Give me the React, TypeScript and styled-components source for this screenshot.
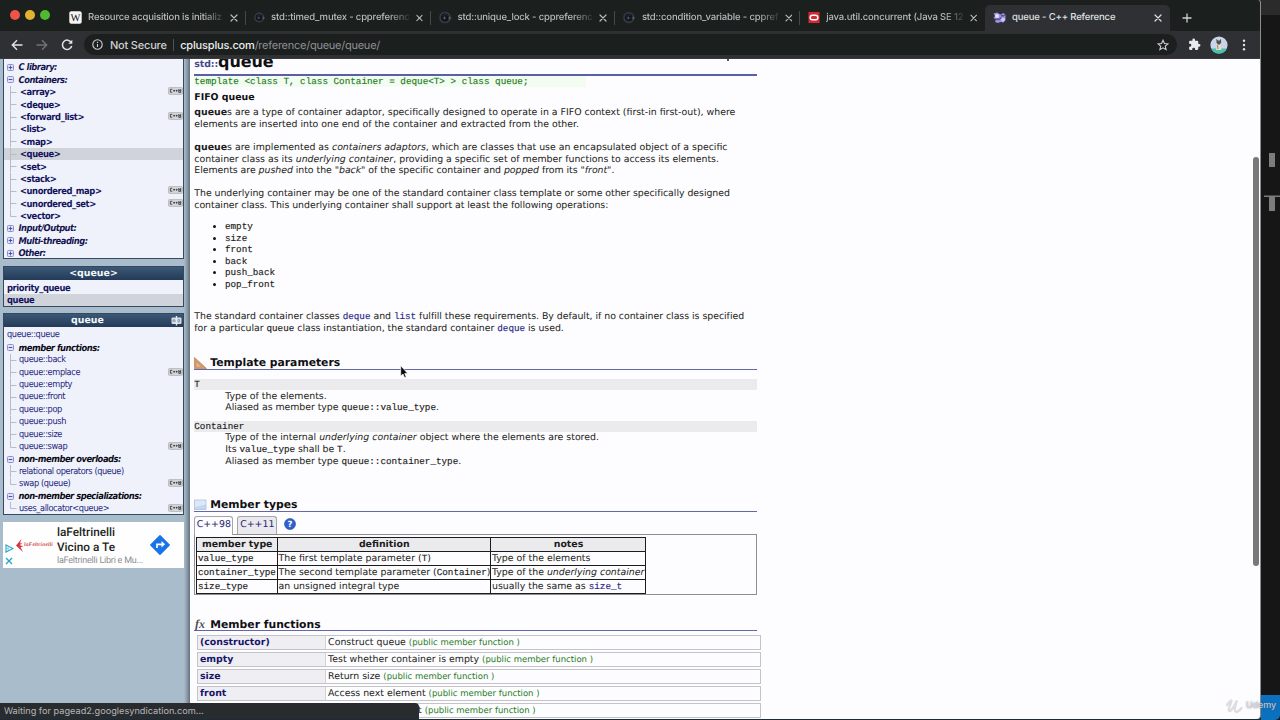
import React from "react";
import styled, { createGlobalStyle, css } from "styled-components";

const sans = `"DejaVu Sans", sans-serif`;
const narrow = `"DejaVu Sans Condensed", "DejaVu Sans", sans-serif`;
const mono = `"Liberation Mono", monospace`;
const ui = `Inter, sans-serif`;

const Global = createGlobalStyle`
  * { box-sizing: border-box; }
  body { margin: 0; background: #161616; overflow: hidden; text-rendering: geometricPrecision; }
`;

const Desktop = styled.div`
  display: flex;
  width: 1280px;
  height: 720px;
  overflow: hidden;
  background: #1d2b38;
  position: relative;
`;

const Browser = styled.div`
  width: 1261px;
  height: 719px;
  display: flex;
  flex-direction: column;
  overflow: hidden;
  border-radius: 0 3px 4px 3px;
  border-right: 1px solid #8d8d8f;
  background: #fdfcfe;
`;

/* ---------- browser chrome ---------- */

const TabStrip = styled.div`
  height: 31px;
  flex: none;
  display: flex;
  background: #1b1f1e;
  padding-top: 5px;
`;

const Lights = styled.div`
  width: 61px;
  flex: none;
  display: flex;
  gap: 5px;
  padding: 5px 0 0 10px;
`;

const Light = styled.span<{ $c: string }>`
  width: 10px;
  height: 10px;
  border-radius: 50%;
  background: ${(p) => p.$c};
`;

const TabBox = styled.div<{ $active?: boolean; $line?: boolean }>`
  width: 184.8px;
  flex: none;
  height: 26px;
  display: flex;
  align-items: center;
  padding: 0 8px 1px 8px;
  color: #b9bbbd;
  position: relative;
  ${(p) =>
    p.$active &&
    css`
      background: #2f3033;
      color: #dfe0e2;
      border-radius: 5px 5px 0 0;
    `}
  ${(p) =>
    p.$line &&
    css`
      &::after {
        content: "";
        position: absolute;
        right: 0;
        top: 6px;
        width: 1px;
        height: 14px;
        background: #46494b;
      }
    `}
`;

const TabTitle = styled.span<{ $fade?: boolean }>`
  flex: 1;
  margin: 0 6px;
  padding-top: 1px;
  white-space: nowrap;
  font: 500 9.5px/16px ${ui};
  letter-spacing: -0.15px;
  ${(p) => p.$fade && css`mask-image: linear-gradient(90deg, #000 85%, rgba(0, 0, 0, 0.1) 100%);`}
`;

const NewTab = styled.div`
  padding: 8px 0 0 12px;
  display: flex;
  color: #cfd0d2;
`;

const Toolbar = styled.div`
  height: 28px;
  flex: none;
  display: flex;
  align-items: center;
  background: #2f3033;
  border-bottom: 1px solid #3a3b3d;
  padding: 0 14px 0 11px;
  color: #e3e4e6;
`;

const NavIcons = styled.div`
  display: flex;
  gap: 13px;
  width: 73px;
  flex: none;
`;

const Address = styled.div`
  flex: 1;
  height: 21px;
  border-radius: 11px;
  background: #1b1f1e;
  display: flex;
  align-items: center;
  padding: 0 8px;
  font: 400 11px/20px ${ui};
  white-space: nowrap;
`;

const Secure = styled.span`
  margin-left: 7px;
  padding-right: 6px;
  color: #cfd0d2;
  letter-spacing: -0.2px;
  font-weight: 500;
`;
const Divider = styled.span`
  width: 1px;
  height: 12px;
  background: #505355;
  margin-right: 6.5px;
`;
const Host = styled.span`
  color: #eceded;
  letter-spacing: -0.17px;
  font-weight: 500;
`;
const Path = styled.span`
  flex: 1;
  color: #8f9395;
  letter-spacing: -0.25px;
`;
const ToolEnd = styled.div`
  display: flex;
  align-items: center;
  gap: 9.5px;
  margin-left: 10.5px;
`;
const Menu = styled.span`
  display: flex;
  margin-left: 4.5px;
`;

/* ---------- page ---------- */

const Page = styled.div`
  flex: 1;
  min-height: 0;
  display: flex;
  overflow: hidden;
`;

const Sidebar = styled.aside`
  width: 190px;
  flex: none;
  padding: 0 6px 0 3px;
  background: linear-gradient(90deg, #a9bccb 0, #a9bccb 184px, #8b9ba9 187px, #617080 190px);
  font-family: ${narrow};
`;

const Panel = styled.section<{ $top: number; $height: number }>`
  width: 181px;
  height: ${(p) => p.$height}px;
  margin-top: ${(p) => p.$top}px;
  border: 1px solid #34495d;
  background: #eff2fa;
  overflow: hidden;
`;

const PanelHead = styled.header`
  height: 13px;
  display: flex;
  align-items: center;
  justify-content: center;
  background: linear-gradient(#3b5876, #233b58);
  color: #f4f6fa;
  font: bold 9.4px/12px ${sans};
`;
const HeadText = styled.span<{ $push?: boolean }>`
  ${(p) => p.$push && css`flex: 1; text-align: center;`}
`;

const Rows = styled.div<{ $pad: number }>`
  padding-top: ${(p) => p.$pad}px;
`;

type RowKind = "group" | "groupBlack" | "bold" | "link" | "flat" | "flatBold";

const Row = styled.div<{ $kind: RowKind; $on?: boolean; $ls: number }>`
  height: 12.4px;
  display: flex;
  align-items: center;
  white-space: nowrap;
  padding-left: 3px;
  color: #24247c;
  background: ${(p) => (p.$on ? "#d1d3da" : "transparent")};
  font-size: 9.15px;
  line-height: 11px;
  letter-spacing: ${(p) => p.$ls}px;
  ${(p) =>
    (p.$kind === "group" || p.$kind === "groupBlack") &&
    css`
      font-size: 9.3px;
      font-weight: bold;
      font-style: italic;
      color: ${p.$kind === "group" ? "#14144e" : "#0b0b16"};
    `}
  ${(p) => (p.$kind === "bold" || p.$kind === "flatBold") && css`font-size: 9.3px; font-weight: bold; color: #14145c;`}
`;
const RowText = styled.span<{ $gap: number }>`
  flex: 1;
  padding-top: 1.4px;
  margin-left: ${(p) => p.$gap}px;
`;
const BadgeBox = styled.span`
  display: flex;
  padding: 0 0.5px 1.5px 0;
`;

const Ad = styled.div`
  margin-top: 7px;
  width: 181px;
  height: 46px;
  background: #fefefe;
  display: flex;
  align-items: center;
  font-family: Roboto, sans-serif;
`;
const AdMarks = styled.div`
  width: 11px;
  display: flex;
  flex-direction: column;
  gap: 4px;
  padding: 19px 0 0 2px;
`;
const AdLogo = styled.div`
  display: flex;
  align-items: center;
  width: 43px;
  font: bold italic 5.6px/8px "Liberation Serif", serif;
  letter-spacing: 0.1px;
  color: #d4545a;
  padding-left: 2px;
`;
const AdCopy = styled.div`
  width: 93px;
  padding-top: 1.5px;
  white-space: nowrap;
`;
const AdHead = styled.div`
  font-size: 11.8px;
  line-height: 15px;
  font-weight: 500;
  color: #1d1e20;
`;
const AdSub = styled.div`
  font-size: 9px;
  line-height: 12px;
  letter-spacing: -0.23px;
  color: #8d8e91;
`;

const Main = styled.main`
  width: 572px;
  flex: none;
  padding-left: 4.3px;
  font: 9.38px/11.65px ${sans};
  color: #1c1c20;
  white-space: nowrap;
`;

const Title = styled.h1`
  margin: 0;
  width: 563px;
  height: 17px;
  overflow: hidden;
  display: flex;
  justify-content: space-between;
  border-bottom: 2px solid #5960a5;
`;
const TitleText = styled.div`
  font: bold 16px/18px ${sans};
  color: #101014;
  margin-top: -6px;
  letter-spacing: -0.1px;
`;
const Std = styled.span`
  font-size: 9.4px;
  color: #454a8c;
`;
const Tail = styled.span`
  width: 2px;
  height: 2px;
  margin: 0 28px 0 0;
  background: #555;
`;

const Proto = styled.div`
  width: 392px;
  height: 11px;
  background: #f2fcf1;
  font: 9.29px/12px ${mono};
  color: #1f7d1f;
  -webkit-text-stroke: 0.15px #1f7d1f;
`;

const Tagline = styled.div`
  margin-top: 5px;
  height: 12px;
  font-weight: bold;
  color: #101014;
`;

const Lines = styled.div<{ $top: number; $indent?: number }>`
  margin-top: ${(p) => p.$top}px;
  padding-left: ${(p) => p.$indent ?? 0}px;
`;
const Line = styled.div<{ $ls?: number }>`
  height: 11.65px;
  letter-spacing: ${(p) => p.$ls ?? 0}px;
`;
const Code = styled.code<{ $link?: boolean }>`
  font: 9.28px/11px ${mono};
  letter-spacing: 0;
  color: ${(p) => (p.$link ? "#2a2a86" : "inherit")};
  -webkit-text-stroke: 0.15px currentColor;
`;
const OpRow = styled.div`
  height: 11.65px;
  display: flex;
  align-items: center;
  gap: 8.7px;
  padding-left: 19px;
`;
const Bullet = styled.span`
  width: 3px;
  height: 3px;
  border-radius: 50%;
  background: #141418;
`;

const Section = styled.h2<{ $top: number }>`
  margin: ${(p) => p.$top}px 0 0;
  width: 563px;
  height: 15px;
  display: flex;
  align-items: center;
  border-bottom: 1px solid #6468a9;
  padding-top: 1.4px;
  font: bold 10.8px/13px ${sans};
  color: #101014;
`;
const SectionIcon = styled.span`
  width: 16px;
  flex: none;
  display: flex;
`;
const Bar = styled.div<{ $top: number }>`
  margin-top: ${(p) => p.$top}px;
  width: 563px;
  height: 10.6px;
  background: #ebebed;
  line-height: 10px;
`;

const Switcher = styled.div`
  margin-top: 4px;
  height: 19px;
  display: flex;
  align-items: flex-start;
`;
const Switch = styled.span<{ $on?: boolean }>`
  height: ${(p) => (p.$on ? 19 : 18)}px;
  width: ${(p) => (p.$on ? 39 : 40)}px;
  margin-right: 4px;
  border: 1px solid #a6a6aa;
  border-bottom: 0;
  border-radius: 3px 3px 0 0;
  background: ${(p) => (p.$on ? "#fdfcfe" : "#e9e9ee")};
  color: #24246c;
  text-align: center;
  line-height: 16px;
  position: relative;
`;
const Help = styled.span`
  margin: 2.5px 0 0 3px;
`;
const Box = styled.div`
  width: 563px;
  height: 61px;
  margin-top: -1px;
  border: 1px solid #8f8f92;
  padding: 2px 0 0 1.2px;
`;
const Grid = styled.table`
  border-collapse: collapse;
  table-layout: fixed;
  width: 449px;
  line-height: 11px;
  font-size: 9.39px;
`;
const Col = styled.col<{ $w: number }>`
  width: ${(p) => p.$w}px;
`;
const Th = styled.th`
  height: 14px;
  padding: 0;
  border: 1px solid #1c1c1f;
  background: #ebebee;
`;
const Td = styled.td`
  height: 14px;
  padding: 0 0 0 0.5px;
  border: 1px solid #1c1c1f;
`;

const FnList = styled.div`
  margin: 4px 0 0 2.5px;
  width: 564.5px;
  display: flex;
  flex-direction: column;
  gap: 2px;
`;
const FnRow = styled.div`
  height: 15px;
  display: flex;
  border: 1px solid #c3c3c8;
  line-height: 14.2px;
`;
const FnName = styled.div`
  width: 128px;
  flex: none;
  background: #efeff3;
  border-right: 1px solid #d2d2d6;
  padding-left: 2.2px;
  font-weight: bold;
  color: #17176a;
`;
const FnText = styled.div`
  padding-left: 2.3px;
`;
const Kind = styled.span`
  color: #1f7d1f;
  font-size: 8.5px;
`;

const ScrollTrack = styled.div`
  flex: 1;
  display: flex;
  justify-content: flex-end;
  padding: 98px 1px 0 0;
`;
const Thumb = styled.div`
  width: 6px;
  height: 409px;
  border-radius: 3px;
  background: #78787a;
`;

/* ---------- neighbouring window and overlays ---------- */

const Editor = styled.div`
  width: 19px;
  height: 720px;
  background: #161616;
  display: flex;
  flex-direction: column;
`;
const EditorHead = styled.div`
  height: 15px;
  background: #2b2b2b;
`;
const EditorBody = styled.div`
  flex: 1;
`;
const EditorStatus = styled.div`
  height: 25px;
  background: #0b70bd;
  border-radius: 0 0 5px 0;
`;
const Status = styled.div`
  position: absolute;
  left: 0;
  top: 703px;
  width: 419px;
  height: 16px;
  padding-left: 4px;
  border-radius: 0 4px 0 0;
  background: #292c2f;
  color: #b4b6b8;
  font: 400 9.2px/17px ${ui};
`;
const Pointer = styled.div`
  position: absolute;
  left: 400px;
  top: 365px;
`;
const Mark = styled.div`
  position: absolute;
  left: 1225px;
  top: 697px;
  display: flex;
  align-items: center;
  gap: 3px;
  color: rgba(214, 216, 222, 0.85);
  font: 500 9px/18px ${ui};
  letter-spacing: -0.1px;
  text-shadow: 0 0 2px rgba(90, 90, 100, 0.7);
`;

/* ---------- icons ---------- */

const Close = () => (
  <svg width="8" height="8" viewBox="0 0 8 8" stroke="currentColor" strokeWidth="1.2" strokeLinecap="round">
    <path d="M1 1l6 6M7 1L1 7" />
  </svg>
);
const WikiIcon = () => (
  <svg width="13" height="13" viewBox="0 0 13 13">
    <rect x=".3" y=".3" width="12.4" height="12.4" rx="2" fill="#f5f5f5" />
    <text x="6.5" y="10" textAnchor="middle" fontFamily="Liberation Serif, serif" fontSize="10.5" fill="#111">W</text>
  </svg>
);
const CppRefIcon = () => (
  <svg width="13" height="13" viewBox="0 0 13 13" fill="none">
    <circle cx="6" cy="6.5" r="5" fill="#11151a" stroke="#363c45" strokeWidth="1.7" />
    <path d="M3.500 5.500a3 3 0 0 1 5-1" stroke="#2b313a" />
    <path d="M4 7h3M9 7h3.500M10.700 5.300v3.400M5.500 5.500v3" stroke="#525c6a" strokeWidth="1" />
  </svg>
);
const OracleIcon = () => (
  <svg width="13" height="13" viewBox="0 0 13 13">
    <rect x=".5" y=".5" width="12" height="12" fill="#d32a31" />
    <rect x="2.3" y="4" width="8.400" height="5" rx="2.5" fill="none" stroke="#fff" strokeWidth="1.5" />
  </svg>
);
const CplusIcon = () => (
  <svg width="13" height="13" viewBox="0 0 13 13">
    <path d="M.5 2.500L4 1.500l3.500 2 3-1.500 2 2v5l-2 2.500-3-.5L5 12 2 11l1-2.500L.5 7 2 5z" fill="#9b92e0" />
    <circle cx="4" cy="5" r="2" fill="#e4e0fb" />
    <circle cx="10" cy="8.500" r="1.900" fill="#cfc9f7" />
    <path d="M2.500 8l3.500.5 2.500-2M8 4.500l2 .5 2-1" stroke="#554ca0" strokeWidth="1.300" fill="none" />
  </svg>
);
const Sign = ({ plus }: { plus?: boolean }) => (
  <svg width="7" height="7" viewBox="0 0 7 7">
    <rect x=".5" y=".5" width="6" height="6" rx="1" fill="#dfe2f8" stroke="#8c90cc" />
    <path d={plus ? "M1.700 3.500h3.600M3.500 1.700v3.600" : "M1.700 3.500h3.600"} stroke="#4a4fa6" />
  </svg>
);
const Twig = ({ last }: { last?: boolean }) => (
  <svg width="10" height="12.4" viewBox="0 0 10 12.4" fill="none" stroke="#b9bcc6">
    <path d={last ? "M3.500 0v6.500h6" : "M3.500 0v12.400M3.500 6.500h6"} />
  </svg>
);
const Badge = () => (
  <BadgeBox>
    <svg width="15" height="8" viewBox="0 0 15 8">
      <rect x=".4" y=".4" width="14.200" height="7" rx="1.300" fill="#d4d6da" stroke="#a9abb0" strokeWidth=".7" />
      <path d="M4.300 2.300H2.400v2.900h1.900M5.200 3.700h1.800M6.100 2.800v1.800M7.700 3.700h1.800M8.600 2.800v1.800M10.800 2v3.500M12.700 2v3.500M10.800 3.700h2M10.800 5.300h2" stroke="#3b3d42" strokeWidth=".9" fill="none" />
    </svg>
  </BadgeBox>
);
const PanelIcon = () => (
  <svg width="12" height="10" viewBox="0 0 12 10">
    <rect x=".5" y="1.500" width="10" height="6.500" rx="1" fill="#d7dee6" />
    <path d="M5.500 0v9.500" stroke="#e6ebf0" strokeWidth="1.400" />
    <path d="M2 6v-2l1-.5 1 .5v2M2 5h2M7 3.500h1.500V6H7z" stroke="#8494a4" strokeWidth=".8" fill="none" />
  </svg>
);

type Item = { t: string; kind: RowKind; plus?: boolean; last?: boolean; badge?: boolean; on?: boolean };

const library: Item[] = [
  { t: "C library:", kind: "group", plus: true },
  { t: "Containers:", kind: "group" },
  { t: "<array>", kind: "bold", badge: true },
  { t: "<deque>", kind: "bold" },
  { t: "<forward_list>", kind: "bold", badge: true },
  { t: "<list>", kind: "bold" },
  { t: "<map>", kind: "bold" },
  { t: "<queue>", kind: "bold", on: true },
  { t: "<set>", kind: "bold" },
  { t: "<stack>", kind: "bold" },
  { t: "<unordered_map>", kind: "bold", badge: true },
  { t: "<unordered_set>", kind: "bold", badge: true },
  { t: "<vector>", kind: "bold", last: true },
  { t: "Input/Output:", kind: "group", plus: true },
  { t: "Multi-threading:", kind: "group", plus: true },
  { t: "Other:", kind: "group", plus: true },
];
const header: Item[] = [
  { t: "priority_queue", kind: "flatBold" },
  { t: "queue", kind: "flatBold", on: true },
];
const members: Item[] = [
  { t: "queue::queue", kind: "flat" },
  { t: "member functions:", kind: "groupBlack" },
  { t: "queue::back", kind: "link" },
  { t: "queue::emplace", kind: "link", badge: true },
  { t: "queue::empty", kind: "link" },
  { t: "queue::front", kind: "link" },
  { t: "queue::pop", kind: "link" },
  { t: "queue::push", kind: "link" },
  { t: "queue::size", kind: "link" },
  { t: "queue::swap", kind: "link", last: true, badge: true },
  { t: "non-member overloads:", kind: "groupBlack" },
  { t: "relational operators (queue)", kind: "link" },
  { t: "swap (queue)", kind: "link", last: true, badge: true },
  { t: "non-member specializations:", kind: "groupBlack" },
  { t: "uses_allocator<queue>", kind: "link", last: true, badge: true },
];
const spacing: Record<RowKind, number> = { group: -0.5, groupBlack: -0.48, bold: -0.42, link: -0.38, flat: -0.38, flatBold: -0.38 };
const gaps: Record<RowKind, number> = { group: 4.5, groupBlack: 4.5, bold: 3, link: 2, flat: 0, flatBold: 0 };

const Tree = ({ items }: { items: Item[] }) => (
  <>
    {items.map((it) => (
      <Row key={it.t} $kind={it.kind} $on={it.on} $ls={spacing[it.kind]}>
        {(it.kind === "group" || it.kind === "groupBlack") && <Sign plus={it.plus} />}
        {(it.kind === "bold" || it.kind === "link") && <Twig last={it.last} />}
        <RowText $gap={gaps[it.kind]}>{it.t}</RowText>
        {it.badge && <Badge />}
      </Row>
    ))}
  </>
);

const fns = [
  ["(constructor)", "Construct queue"],
  ["empty", "Test whether container is empty"],
  ["size", "Return size"],
  ["front", "Access next element"],
  ["back", "Access last element"],
];

export default function App() {
  return (
    <Desktop>
      <Global />
      <Browser>
        <TabStrip>
          <Lights>
            <Light $c="#ee5448" />
            <Light $c="#e0b22f" />
            <Light $c="#4fb92f" />
          </Lights>
          <TabBox $line><WikiIcon /><TabTitle $fade>Resource acquisition is initializ</TabTitle><Close /></TabBox>
          <TabBox $line><CppRefIcon /><TabTitle $fade>std::timed_mutex - cppreferenc</TabTitle><Close /></TabBox>
          <TabBox $line><CppRefIcon /><TabTitle $fade>std::unique_lock - cppreferenc</TabTitle><Close /></TabBox>
          <TabBox $line><CppRefIcon /><TabTitle $fade>std::condition_variable - cppref</TabTitle><Close /></TabBox>
          <TabBox><OracleIcon /><TabTitle $fade>java.util.concurrent (Java SE 12</TabTitle><Close /></TabBox>
          <TabBox $active><CplusIcon /><TabTitle>queue - C++ Reference</TabTitle><Close /></TabBox>
          <NewTab>
            <svg width="10" height="10" viewBox="0 0 10 10" stroke="currentColor" strokeWidth="1.300"><path d="M5 .5v9M.5 5h9" /></svg>
          </NewTab>
        </TabStrip>
        <Toolbar>
          <NavIcons>
            <svg width="12" height="12" viewBox="0 0 12 12" fill="none" stroke="#e3e4e6" strokeWidth="1.400"><path d="M11.500 6H1.500M6 1.300L1.300 6 6 10.700" /></svg>
            <svg width="12" height="12" viewBox="0 0 12 12" fill="none" stroke="#707376" strokeWidth="1.400"><path d="M.5 6h10M6 1.300L10.700 6 6 10.700" /></svg>
            <svg width="12" height="12" viewBox="0 0 12 12" fill="none" stroke="#e3e4e6" strokeWidth="1.500"><path d="M10.300 3.600A4.700 4.700 0 1 0 10.700 7" /><path d="M11.300.8v4H7.300z" fill="#e3e4e6" stroke="none" /></svg>
          </NavIcons>
          <Address>
            <svg width="11" height="11" viewBox="0 0 11 11" fill="none" stroke="#cfd0d2" strokeWidth="1.100"><circle cx="5.500" cy="5.500" r="4.700" /><path d="M5.500 5v3M5.500 2.700v1.200" /></svg>
            <Secure>Not Secure</Secure>
            <Divider />
            <Host>cplusplus.com</Host>
            <Path>/reference/queue/queue/</Path>
            <svg width="12" height="12" viewBox="0 0 24 24" fill="none" stroke="#cfd0d2" strokeWidth="2.200"><path d="M12 2.500l2.900 6.600 7.100.6-5.400 4.700 1.600 7L12 17.700l-6.200 3.700 1.600-7L2 9.700l7.100-.6z" /></svg>
          </Address>
          <ToolEnd>
            <svg width="13" height="13" viewBox="0 0 24 24" fill="#e9eaeb"><path d="M20.500 11H19V7a2 2 0 0 0-2-2h-4V3.500a2.500 2.500 0 0 0-5 0V5H4a2 2 0 0 0-2 2v3.800h1.500a2.700 2.700 0 0 1 0 5.400H2V20a2 2 0 0 0 2 2h3.800v-1.500a2.700 2.700 0 0 1 5.400 0V22H17a2 2 0 0 0 2-2v-4h1.500a2.500 2.500 0 0 0 0-5z" /></svg>
            <svg width="18" height="18" viewBox="0 0 18 18">
              <circle cx="9" cy="9" r="8.600" fill="#c9d3ea" />
              <path d="M1.200 12.500h15.600A8.600 8.600 0 0 1 1.200 12.500z" fill="#4bc0ae" />
              <path d="M6.500 9.500l2-1 2 1 1 4.500H6z" fill="#e9dcc0" />
              <path d="M6.300 2.800L8 4.500h1.500L11 2.800l.2 3.700-1.400 2H8L6.500 6.700z" fill="#5a5048" />
              <path d="M7.500 9l.5 4" stroke="#7a6d5c" strokeWidth=".8" />
            </svg>
            <Menu>
              <svg width="4" height="12" viewBox="0 0 4 12" fill="#e3e4e6"><circle cx="2" cy="1.700" r="1.200" /><circle cx="2" cy="6" r="1.200" /><circle cx="2" cy="10.300" r="1.200" /></svg>
            </Menu>
          </ToolEnd>
        </Toolbar>

        <Page>
          <Sidebar>
            <Panel $top={-1} $height={201}>
              <Rows $pad={2}><Tree items={library} /></Rows>
            </Panel>
            <Panel $top={7} $height={41}>
              <PanelHead><HeadText>&lt;queue&gt;</HeadText></PanelHead>
              <Rows $pad={1.4}><Tree items={header} /></Rows>
            </Panel>
            <Panel $top={6} $height={202}>
              <PanelHead><HeadText $push>queue</HeadText><PanelIcon /></PanelHead>
              <Rows $pad={2}><Tree items={members} /></Rows>
            </Panel>
            <Ad>
              <AdMarks>
                <svg width="9" height="9" viewBox="0 0 9 9" fill="none" stroke="#22a5c4" strokeWidth="1.100"><path d="M1 1l7 3.500-7 3.500zM3 3.500v2" /></svg>
                <svg width="8" height="8" viewBox="0 0 8 8" stroke="#22a5c4" strokeWidth="1.300"><path d="M1 1l6 6M7 1L1 7" /></svg>
              </AdMarks>
              <AdLogo>
                <svg width="8" height="13" viewBox="0 0 8 13" fill="#d7343c"><path d="M5.500 0L0 6.500 7 13 4.500 8 7.500 7.500 3.500 6 6.500 4.500 4 4.300z" /></svg>
                laFeltrinelli
              </AdLogo>
              <AdCopy>
                <AdHead>laFeltrinelli</AdHead>
                <AdHead>Vicino a Te</AdHead>
                <AdSub>laFeltrinelli Libri e Mu...</AdSub>
              </AdCopy>
              <svg width="20" height="20" viewBox="0 0 20 20">
                <path d="M10 .8L19.200 10 10 19.200.8 10z" fill="#1a73e8" stroke="#1a73e8" strokeWidth="1.500" strokeLinejoin="round" />
                <path d="M7 13V9.300h5.500" fill="none" stroke="#fff" strokeWidth="1.700" /><path d="M11.500 6l3.600 3.300-3.600 3.300z" fill="#fff" />
              </svg>
            </Ad>
          </Sidebar>

          <Main>
            <Title>
              <TitleText><Std>std::</Std>queue</TitleText>
              <Tail />
            </Title>
            <Proto>template &lt;class T, class Container = deque&lt;T&gt; &gt; class queue;</Proto>
            <Tagline>FIFO queue</Tagline>
            <Lines $top={3.2}>
              <Line><b>queue</b>s are a type of container adaptor, specifically designed to operate in a FIFO context (first-in first-out), where</Line>
              <Line>elements are inserted into one end of the container and extracted from the other.</Line>
            </Lines>
            <Lines $top={11.4}>
              <Line><b>queue</b>s are implemented as <i>containers adaptors</i>, which are classes that use an encapsulated object of a specific</Line>
              <Line>container class as its <i>underlying container</i>, providing a specific set of member functions to access its elements.</Line>
              <Line $ls={-0.04}>Elements are <i>pushed</i> into the <i>"back"</i> of the specific container and <i>popped</i> from its <i>"front"</i>.</Line>
            </Lines>
            <Lines $top={11.4}>
              <Line $ls={-0.04}>The underlying container may be one of the standard container class template or some other specifically designed</Line>
              <Line $ls={-0.04}>container class. This underlying container shall support at least the following operations:</Line>
            </Lines>
            <Lines $top={9.1}>
              {["empty", "size", "front", "back", "push_back", "pop_front"].map((op) => (
                <OpRow key={op}><Bullet /><Code>{op}</Code></OpRow>
              ))}
            </Lines>
            <Lines $top={20.9}>
              <Line $ls={-0.03}>The standard container classes <Code $link>deque</Code> and <Code $link>list</Code> fulfill these requirements. By default, if no container class is specified</Line>
              <Line $ls={-0.03}>for a particular <Code>queue</Code> class instantiation, the standard container <Code $link>deque</Code> is used.</Line>
            </Lines>
            <Section $top={20.3}>
              <SectionIcon>
                <svg width="13" height="12" viewBox="0 0 13 12"><path d="M.5.500v11h12z" fill="#d29a6c" stroke="#b98356" strokeWidth=".7" /><path d="M2.800 6v3.500h3.500z" fill="#e3bf9f" /></svg>
              </SectionIcon>
              Template parameters
            </Section>
            <Bar $top={9.2}><Code>T</Code></Bar>
            <Lines $top={0.9} $indent={31}>
              <Line>Type of the elements.</Line>
              <Line $ls={-0.04}>Aliased as member type <Code>queue::value_type</Code>.</Line>
            </Lines>
            <Bar $top={7.4}><Code>Container</Code></Bar>
            <Lines $top={0.5} $indent={31}>
              <Line>Type of the internal <i>underlying container</i> object where the elements are stored.</Line>
              <Line $ls={-0.04}>Its <Code>value_type</Code> shall be <Code>T</Code>.</Line>
              <Line $ls={-0.04}>Aliased as member type <Code>queue::container_type</Code>.</Line>
            </Lines>
            <Section $top={29.7}>
              <SectionIcon>
                <svg width="13" height="12" viewBox="0 0 13 12"><rect x=".5" y="1" width="11.500" height="9.500" fill="#c3d8f0" stroke="#a5bcd8" strokeWidth=".7" /><path d="M1 1.500h10.500v4L1 8z" fill="#dbe8f7" /></svg>
              </SectionIcon>
              Member types
            </Section>
            <Switcher>
              <Switch $on>C++98</Switch>
              <Switch>C++11</Switch>
              <Help>
                <svg width="12" height="12" viewBox="0 0 12 12"><circle cx="6" cy="6" r="5.500" fill="#2f5fd0" stroke="#24479c" strokeWidth=".6" /><text x="6" y="9" textAnchor="middle" fontFamily="DejaVu Sans, sans-serif" fontWeight="bold" fontSize="8.500" fill="#fff">?</text></svg>
              </Help>
            </Switcher>
            <Box>
              <Grid>
                <colgroup><Col $w={80.5} /><Col $w={213.5} /><Col $w={155} /></colgroup>
                <tbody>
                  <tr><Th>member type</Th><Th>definition</Th><Th>notes</Th></tr>
                  <tr><Td><Code>value_type</Code></Td><Td>The first template parameter (<Code>T</Code>)</Td><Td>Type of the elements</Td></tr>
                  <tr><Td><Code>container_type</Code></Td><Td>The second template parameter (<Code>Container</Code>)</Td><Td>Type of the <i>underlying container</i></Td></tr>
                  <tr><Td><Code>size_type</Code></Td><Td>an unsigned integral type</Td><Td>usually the same as <Code $link>size_t</Code></Td></tr>
                </tbody>
              </Grid>
            </Box>
            <Section $top={21.5}>
              <SectionIcon>
                <svg width="14" height="13" viewBox="0 0 14 13"><text x="1" y="9.500" fontFamily="Liberation Serif, serif" fontStyle="italic" fontSize="12" fill="#4a4b50">fx</text></svg>
              </SectionIcon>
              Member functions
            </Section>
            <FnList>
              {fns.map(([name, text]) => (
                <FnRow key={name}>
                  <FnName>{name}</FnName>
                  <FnText>{text} <Kind>(public member function )</Kind></FnText>
                </FnRow>
              ))}
            </FnList>
          </Main>
          <ScrollTrack><Thumb /></ScrollTrack>
        </Page>
      </Browser>

      <Editor>
        <EditorHead />
        <EditorBody>
          <svg width="19" height="300" viewBox="0 0 19 300" fill="#7c7c7c">
            <rect x="8" y="138" width="6" height="14" />
            <rect x="3" y="180.500" width="16" height="1.500" />
            <rect x="8" y="182" width="6" height="14" />
          </svg>
        </EditorBody>
        <EditorStatus />
      </Editor>

      <Status>Waiting for pagead2.googlesyndication.com...</Status>
      <Pointer>
        <svg width="9" height="14" viewBox="0 0 9 14"><path d="M.7.700v10.300l2.300-2 1.500 3.600 1.700-.7-1.500-3.500h3z" fill="#0a0a0a" stroke="#fff" strokeWidth=".7" /></svg>
      </Pointer>
      <Mark>
        <svg width="18" height="16" viewBox="0 0 18 16" fill="none" stroke="currentColor" strokeWidth="2.400" strokeLinecap="round"><path d="M2 7C4 4.500 6 2 6.500 2.500S3 10 4 12.500 9 9 12 2.500C10 8 9 12 10.500 13.500S15 12 16.500 10" /></svg>
        Udemy
      </Mark>
    </Desktop>
  );
}
